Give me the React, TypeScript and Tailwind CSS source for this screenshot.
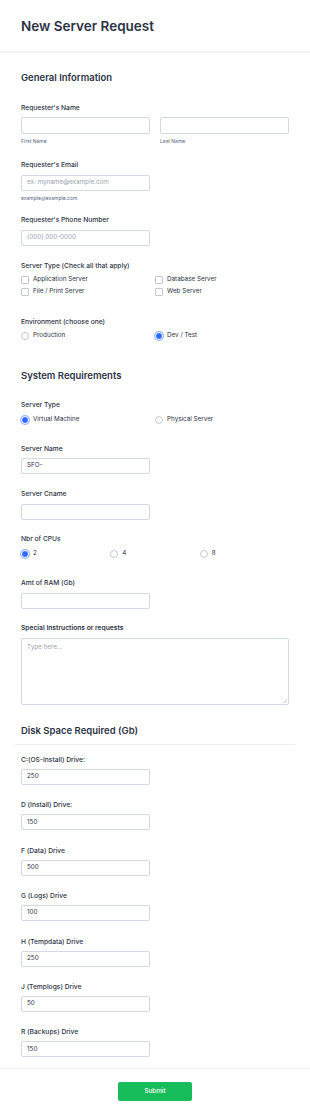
import React from 'react';

const font = { fontFamily: 'Inter, "Noto Sans", sans-serif' };

function Label({ children, className = '' }: { children: React.ReactNode; className?: string }) {
  return <div className={`text-[6.7px] leading-[10px] font-medium text-[#2c3345] ${className}`}>{children}</div>;
}

function Input({ value, placeholder, className = '' }: { value?: string; placeholder?: string; className?: string }) {
  return (
    <div
      className={`h-[16px] w-[129px] rounded-[2px] border border-[#d3d8e2] bg-white px-[5px] flex items-center text-[6.3px] ${className}`}
    >
      {value ? <span className="text-[#2c3345]">{value}</span> : <span className="text-[#9aa1b0]">{placeholder}</span>}
    </div>
  );
}

function Checkbox({ label }: { label: string }) {
  return (
    <div className="flex items-center h-[12px] gap-[4px]">
      <span className="w-[8px] h-[8px] rounded-[1px] border border-[#c3c8d3] bg-white" />
      <span className="text-[6.3px] text-[#2c3345]">{label}</span>
    </div>
  );
}

function Radio({ label, checked = false }: { label: string; checked?: boolean }) {
  return (
    <div className="flex items-center h-[12px] gap-[4px]">
      {checked ? (
        <span className="w-[8px] h-[8px] rounded-full bg-[#2e69ff] border-[1.5px] border-white ring-1 ring-[#9bb8ff]" />
      ) : (
        <span className="w-[8px] h-[8px] rounded-full border border-[#c3c8d3] bg-white" />
      )}
      <span className="text-[6.3px] text-[#2c3345]">{label}</span>
    </div>
  );
}

const drives = [
  { label: 'C:(OS-Install) Drive:', value: '250' },
  { label: 'D (Install) Drive:', value: '150' },
  { label: 'F (Data) Drive', value: '500' },
  { label: 'G (Logs) Drive', value: '100' },
  { label: 'H (Tempdata) Drive', value: '250' },
  { label: 'J (Templogs) Drive', value: '50' },
  { label: 'R (Backups) Drive', value: '150' },
];

export default function App() {
  return (
    <div className="w-[310px] min-h-[1116px] bg-white text-[#2c3345]" style={font}>
      {/* header */}
      <div className="h-[53px] px-[21px] pt-[3px] flex items-center border-b-2 border-[#f1f2f6]">
        <h1 className="text-[13.5px] font-semibold leading-none">New Server Request</h1>
      </div>

      <div className="px-[21px] flex flex-col">
        <h2 className="mt-[18px] text-[9.5px] leading-[14px] font-semibold">General Information</h2>

        <Label className="mt-[18px]">Requester's Name</Label>
        <div className="mt-[4px] flex gap-[10px]">
          <div className="flex-1">
            <Input className="w-full h-[17px]" />
            <div className="mt-[4px] text-[5px] leading-[7px] text-[#57647e]">First Name</div>
          </div>
          <div className="flex-1">
            <Input className="w-full h-[17px]" />
            <div className="mt-[4px] text-[5px] leading-[7px] text-[#57647e]">Last Name</div>
          </div>
        </div>

        <Label className="mt-[15px]">Requester's Email</Label>
        <Input className="mt-[5px] w-[127px]" placeholder="ex: myname@example.com" />
        <div className="mt-[4px] text-[5px] leading-[7px] text-[#57647e]">example@example.com</div>

        <Label className="mt-[13px]">Requester's Phone Number</Label>
        <Input className="mt-[5px] w-[127px]" placeholder="(000) 000-0000" />

        <Label className="mt-[15px]">Server Type (Check all that apply)</Label>
        <div className="mt-[3px] grid grid-cols-2">
          <Checkbox label="Application Server" />
          <Checkbox label="Database Server" />
          <Checkbox label="File / Print Server" />
          <Checkbox label="Web Server" />
        </div>

        <Label className="mt-[19px]">Environment (choose one)</Label>
        <div className="mt-[3px] grid grid-cols-2">
          <Radio label="Production" />
          <Radio label="Dev / Test" checked />
        </div>

        <h2 className="mt-[27px] text-[9.5px] leading-[14px] font-semibold">System Requirements</h2>

        <Label className="mt-[17px]">Server Type</Label>
        <div className="mt-[4px] grid grid-cols-2">
          <Radio label="Virtual Machine" checked />
          <Radio label="Physical Server" />
        </div>

        <Label className="mt-[18px]">Server Name</Label>
        <Input className="mt-[4px]" value="SFO-" />

        <Label className="mt-[15px]">Server Cname</Label>
        <Input className="mt-[5px]" />

        <Label className="mt-[14px]">Nbr of CPUs</Label>
        <div className="mt-[4px] grid grid-cols-3">
          <Radio label="2" checked />
          <Radio label="4" />
          <Radio label="8" />
        </div>

        <Label className="mt-[18px]">Amt of RAM (Gb)</Label>
        <Input className="mt-[5px]" />

        <Label className="mt-[14px] font-semibold">Special Instructions or requests</Label>
        <div className="mt-[5px] h-[67px] w-full rounded-[2px] border border-[#d3d8e2] px-[5px] pt-[4px] text-[6.3px] text-[#9aa1b0] relative">
          Type here...
          <svg className="absolute right-[1px] bottom-[1px]" width="4" height="4" viewBox="0 0 4 4">
            <path d="M4 0L0 4M4 2L2 4" stroke="#b8bdc9" strokeWidth="0.6" />
          </svg>
        </div>

        <h2 className="mt-[19px] text-[9.5px] leading-[14px] font-semibold">Disk Space Required (Gb)</h2>
        <div className="mt-[6px] -mx-[6px] h-px bg-[#eceef3]" />

        <div className="mt-[10px] flex flex-col gap-[15.4px]">
          {drives.map((d) => (
            <div key={d.label}>
              <Label>{d.label}</Label>
              <Input className="mt-[4px]" value={d.value} />
            </div>
          ))}
        </div>
      </div>

      <div className="mt-[11px] border-t border-[#eceef3] flex justify-center pt-[13px] pb-[17px]">
        <button className="h-[19px] w-[74px] rounded-[2px] bg-[#18bd5b] text-white text-[6.3px] font-medium">
          Submit
        </button>
      </div>
    </div>
  );
}
